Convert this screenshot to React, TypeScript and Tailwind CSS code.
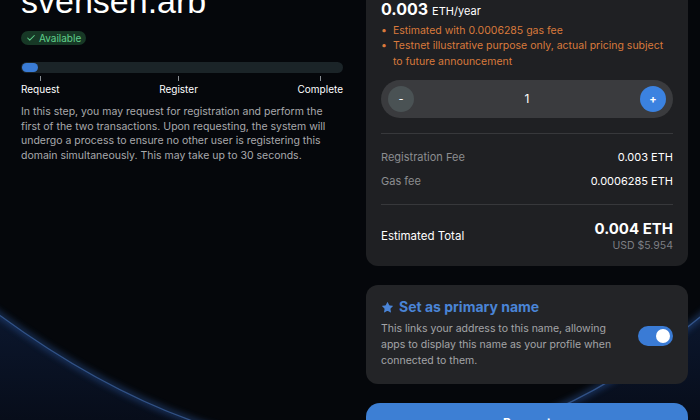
import { Check, Star } from "lucide-react";

const font = { fontFamily: "Inter, 'Liberation Sans', sans-serif" };

const arc = "M -10 308 Q 380 600 720 300";

const Backdrop = () => (
    <svg className="absolute inset-0" width="700" height="420" viewBox="0 0 700 420">
        <defs>
            <linearGradient id="planet" x1="0" y1="0" x2="0" y2="1">
                <stop offset="0" stopColor="#0c1830" />
                <stop offset="1" stopColor="#060a14" />
            </linearGradient>
            <filter id="blur" x="-20%" y="-20%" width="140%" height="140%">
                <feGaussianBlur stdDeviation="3" />
            </filter>
        </defs>
        <path d={`${arc} L 720 430 L -10 430 Z`} fill="url(#planet)" />
        <path d={arc} fill="none" stroke="#2f5da8" strokeWidth="6" opacity="0.45" filter="url(#blur)" />
        <path d={arc} fill="none" stroke="#4a78c0" strokeWidth="1.2" opacity="0.55" />
    </svg>
);

const Steps = () => {
    const steps = ["Request", "Register", "Complete"];
    return (
        <div className="flex justify-between mt-[3px]">
            {steps.map(step => (
                <div key={step} className="flex flex-col items-center">
                    <div className="w-px h-[5px] bg-[#8a8f94]" />
                    <span className="text-[10px] leading-[13px] text-white mt-[2px]">{step}</span>
                </div>
            ))}
        </div>
    );
};

export default function App() {
    return (
        <div className="relative w-[700px] h-[420px] overflow-hidden bg-[#05070b]" style={font}>
            <Backdrop />

            <div className="relative flex gap-[23px] pl-[21px]">
                {/* left column */}
                <div className="w-[322px] flex flex-col">
                    <h1 className="text-[34px] leading-none text-white mt-[-16px]" style={{ fontFamily: "'Liberation Sans', sans-serif" }}>
                        svensen.arb
                    </h1>
                    <div className="mt-[13px] self-start flex items-center gap-[3px] h-[14px] px-[5px] rounded-full bg-[#173826] text-[#5fcf8a] text-[10px]">
                        <Check size={10} strokeWidth={2.5} />
                        Available
                    </div>

                    <div className="mt-[17px] h-[11px] rounded-full bg-[#1b2428] p-[1px]">
                        <div className="w-[16px] h-full rounded-full bg-[#3a7bd5]" />
                    </div>
                    <Steps />

                    <p className="mt-[9px] text-[10.5px] leading-[14.7px] text-[#a9aaad] pr-[10px]">
                        In this step, you may request for registration and perform the first of the two transactions. Upon requesting, the system will undergo a process to ensure no other user is registering this domain simultaneously. This may take up to 30 seconds.
                    </p>
                </div>

                {/* right column */}
                <div className="w-[322px] flex flex-col gap-[19px] mt-[-17px]">
                    <div className="rounded-[12px] bg-[#1f2023] px-[15px] pt-[16px] pb-[13px]">
                        <div className="flex items-baseline gap-[4px] text-white">
                            <span className="text-[16px] font-bold leading-[20px]">0.003</span>
                            <span className="text-[11px]">ETH/year</span>
                        </div>
                        <ul className="mt-[3px] text-[10.5px] leading-[15.5px] text-[#d97a3c]">
                            <li className="flex gap-[6px]"><span>•</span><span>Estimated with 0.0006285 gas fee</span></li>
                            <li className="flex gap-[6px]"><span>•</span><span>Testnet illustrative purpose only, actual pricing subject to future announcement</span></li>
                        </ul>

                        <div className="mt-[11px] h-[38px] rounded-full bg-[#3a3b3e] flex items-center justify-between px-[7px]">
                            <button className="w-[26px] h-[26px] rounded-full bg-[#4a5254] text-white text-[11px] flex items-center justify-center">-</button>
                            <span className="text-white text-[12px]">1</span>
                            <button className="w-[26px] h-[26px] rounded-full bg-[#3b82e0] text-white text-[11px] font-bold flex items-center justify-center">+</button>
                        </div>

                        <div className="mt-[15px] h-px bg-[#37383b]" />

                        <div className="mt-[16px] flex justify-between text-[11px] leading-[14px]">
                            <span className="text-[#8c8d90]">Registration Fee</span>
                            <span className="text-white">0.003 ETH</span>
                        </div>
                        <div className="mt-[10px] flex justify-between text-[11px] leading-[14px]">
                            <span className="text-[#8c8d90]">Gas fee</span>
                            <span className="text-white">0.0006285 ETH</span>
                        </div>

                        <div className="mt-[16px] h-px bg-[#37383b]" />

                        <div className="mt-[15px] flex justify-between items-center">
                            <span className="text-white text-[11.5px]">Estimated Total</span>
                            <div className="flex flex-col items-end">
                                <span className="text-white text-[15px] font-bold leading-[18px]">0.004 ETH</span>
                                <span className="text-[#7d7f83] text-[10.5px] leading-[15px]">USD $5.954</span>
                            </div>
                        </div>
                    </div>

                    <div className="rounded-[12px] bg-[#232427] px-[15px] pt-[13px] pb-[15px]">
                        <div className="flex items-center gap-[5px] text-[#4a84d6]">
                            <Star size={13} fill="currentColor" strokeWidth={0} />
                            <span className="text-[14px] font-bold leading-[18px]">Set as primary name</span>
                        </div>
                        <div className="mt-[5px] flex items-start justify-between">
                            <p className="w-[240px] text-[10.5px] leading-[16px] text-[#a3a4a7]">
                                This links your address to this name, allowing apps to display this name as your profile when connected to them.
                            </p>
                            <div className="mt-[5px] w-[35px] h-[20px] rounded-full bg-[#3a7bd5] flex items-center justify-end pr-[3px]">
                                <div className="w-[14px] h-[14px] rounded-full bg-white" />
                            </div>
                        </div>
                    </div>

                    <button className="h-[40px] rounded-[14px] bg-[#3d7fd4] text-white text-[12px] font-bold">Request</button>
                </div>
            </div>
        </div>
    );
}
